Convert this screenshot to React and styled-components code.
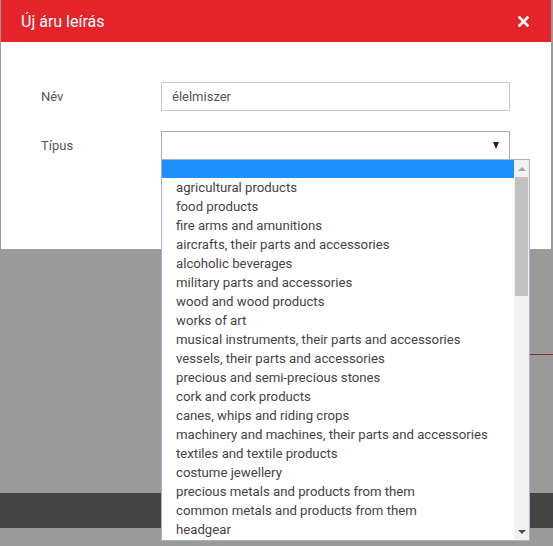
import React from "react";
import styled, { createGlobalStyle } from "styled-components";

const GlobalStyle = createGlobalStyle`
  html, body { margin: 0; padding: 0; background: #9a9a9a; }
  body { font-family: Roboto, "Liberation Sans", Arial, sans-serif; }
  * { box-sizing: border-box; }
`;

const Page = styled.div`
  position: relative;
  width: 553px;
  height: 546px;
  overflow: hidden;
  background: #9a9a9a;
`;

const BackPage = styled.div`
  display: flex;
  flex-direction: column;
  padding-top: 354px;
`;

const RedRule = styled.div`
  margin-left: 300px;
  height: 1px;
  background: #8e2a2f;
`;

const DarkBar = styled.div`
  margin-top: 138px;
  height: 35px;
  background: #444444;
`;

const Modal = styled.div`
  position: absolute;
  top: 0;
  left: 1px;
  width: 550px;
  height: 249px;
  background: #ffffff;
`;

const Header = styled.div`
  height: 42px;
  background: #e4232a;
  padding: 0 22px 0 20px;
  display: flex;
  align-items: center;
  justify-content: space-between;
`;

const Title = styled.h4`
  margin: 0;
  color: #ffffff;
  font-size: 16px;
  font-weight: 400;
`;

const CloseButton = styled.button`
  border: 0;
  background: transparent;
  padding: 0;
  width: 11px;
  height: 11px;
  display: flex;
  cursor: pointer;
`;

const Body = styled.div`
  padding: 40px 40px 0 40px;
  display: grid;
  grid-template-columns: 120px 349px;
  row-gap: 20px;
  align-items: center;
`;

const Label = styled.label`
  font-size: 13px;
  color: #555555;
`;

const Field = styled.div`
  position: relative;
  height: 29px;
  border: 1px solid ${(p) => (p.$active ? "#a9a9a9" : "#cccccc")};
  padding: 0 10px;
  display: flex;
  align-items: center;
  justify-content: space-between;
  font-size: 13px;
  color: #555555;
`;

const Arrow = styled.span`
  width: 0;
  height: 0;
  border-left: 3.5px solid transparent;
  border-right: 3.5px solid transparent;
  border-top: 7px solid ${(p) => p.$color || "#222"};
`;

const ListBox = styled.div`
  position: absolute;
  left: -1px;
  top: 27px;
  width: 369px;
  height: 382px;
  border: 1px solid #a7b3c6;
  background: #ffffff;
  display: flex;
  z-index: 5;
`;

const Options = styled.ul`
  flex: 1;
  margin: 0;
  padding: 0;
  list-style: none;
  overflow: hidden;
`;

const Option = styled.li`
  height: ${(p) => (p.$selected ? "18px" : "19px")};
  line-height: 19px;
  padding-left: 14px;
  font-size: 13.2px;
  color: #444444;
  white-space: nowrap;
  background: ${(p) => (p.$selected ? "#1e90ff" : "transparent")};
`;

const Scrollbar = styled.div`
  width: 15px;
  background: #f1f1f1;
  display: flex;
  flex-direction: column;
`;

const ScrollButton = styled.div`
  height: 17px;
  display: flex;
  align-items: center;
  justify-content: center;
`;

const UpArrow = styled.span`
  width: 0;
  height: 0;
  border-left: 4px solid transparent;
  border-right: 4px solid transparent;
  border-bottom: 4px solid #a3a3a3;
`;

const DownArrow = styled.span`
  width: 0;
  height: 0;
  border-left: 4px solid transparent;
  border-right: 4px solid transparent;
  border-top: 4px solid #505050;
`;

const Thumb = styled.div`
  margin: 0 1px 0 1px;
  height: 119px;
  background: #c1c1c1;
`;

const Track = styled.div`
  flex: 1;
`;

const options = [
  "agricultural products",
  "food products",
  "fire arms and amunitions",
  "aircrafts, their parts and accessories",
  "alcoholic beverages",
  "military parts and accessories",
  "wood and wood products",
  "works of art",
  "musical instruments, their parts and accessories",
  "vessels, their parts and accessories",
  "precious and semi-precious stones",
  "cork and cork products",
  "canes, whips and riding crops",
  "machinery and machines, their parts and accessories",
  "textiles and textile products",
  "costume jewellery",
  "precious metals and products from them",
  "common metals and products from them",
  "headgear",
];

export default function App() {
  return (
    <Page>
      <GlobalStyle />
      <BackPage>
        <RedRule />
        <DarkBar />
      </BackPage>
      <Modal>
        <Header>
          <Title>Új áru leírás</Title>
          <CloseButton aria-label="close">
            <svg width="11" height="11" viewBox="0 0 11 11">
              <path d="M1.5 1.5 L9.5 9.5 M9.5 1.5 L1.5 9.5" stroke="#fff" strokeWidth="2.6" strokeLinecap="square" />
            </svg>
          </CloseButton>
        </Header>
        <Body>
          <Label>Név</Label>
          <Field>élelmiszer</Field>
          <Label>Típus</Label>
          <Field $active role="combobox">
            <span />
            <Arrow />
            <ListBox role="listbox">
              <Options>
                <Option $selected />
                {options.map((o) => (
                  <Option key={o}>{o}</Option>
                ))}
              </Options>
              <Scrollbar>
                <ScrollButton>
                  <UpArrow />
                </ScrollButton>
                <Thumb />
                <Track />
                <ScrollButton>
                  <DownArrow />
                </ScrollButton>
              </Scrollbar>
            </ListBox>
          </Field>
        </Body>
      </Modal>
    </Page>
  );
}
